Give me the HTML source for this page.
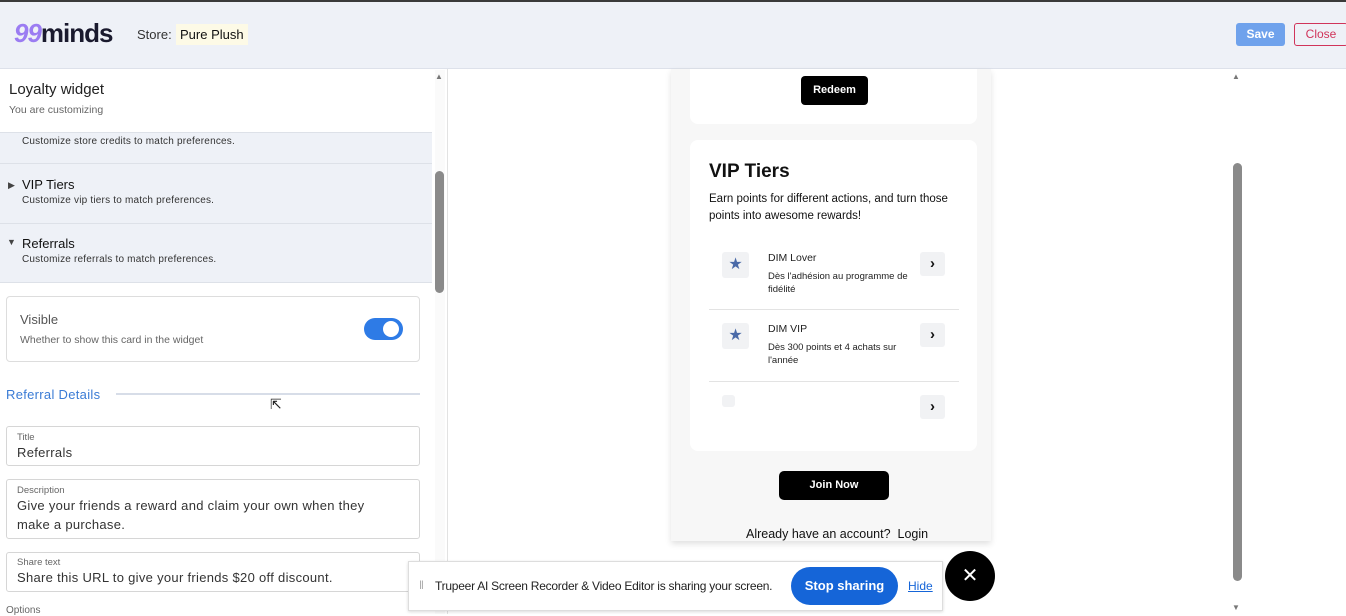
<!DOCTYPE html>
<html><head><style>
*{box-sizing:border-box;margin:0;padding:0}
body{width:1346px;height:614px;overflow:hidden;background:#fff;font-family:"Liberation Sans",sans-serif;position:relative;color:#222}
.a{position:absolute}
.hdr{left:0;top:0;width:1346px;height:69px;background:#eef1f7;border-top:2px solid #3a3a3a;border-bottom:1px solid #dde1ea}
.sec{left:0;width:432px;background:#eef1f7;border-bottom:1px solid #dde1e8}
.sec b{position:absolute;left:22px;font-weight:normal;font-size:13px;color:#111}
.sec i{position:absolute;left:22px;font-style:normal;font-size:10px;color:#333;letter-spacing:.2px}
.inp{left:6px;width:414px;border:1px solid #d6d6d6;border-radius:3px;background:#fff}
.inp .l{position:absolute;left:10px;font-size:9.5px;color:#666}
.inp .v{position:absolute;left:10px;font-size:13px;color:#333;line-height:19px;letter-spacing:.3px}
.arr{left:920px;width:25px;height:24px;background:#f1f2f4;border-radius:3px;font-size:15px;text-align:center;line-height:23px;font-weight:bold;color:#111}
.star{left:722px;width:27px;height:26px;background:#f1f2f4;border-radius:3px;color:#4a6aa8;font-size:16px;text-align:center;line-height:26px}
</style></head><body>
<div class="a hdr"></div>
<div class="a" style="left:14px;top:18px;font-size:26px;font-weight:bold;letter-spacing:-1px"><span style="color:#9b7cf2;font-style:italic">99</span><span style="color:#1a1a2e">minds</span></div>
<div class="a" style="left:137px;top:27px;font-size:13px;color:#333">Store:</div>
<div class="a" style="left:176px;top:24px;padding:3px 4px;background:#fdfae6;font-size:13px;color:#111">Pure Plush</div>
<div class="a" style="left:1236px;top:23px;width:49px;height:23px;background:#6fa2ec;border-radius:3px;color:#fff;font-size:12px;font-weight:bold;text-align:center;line-height:23px">Save</div>
<div class="a" style="left:1294px;top:23px;width:54px;height:23px;border:1px solid #d0345a;border-radius:3px;color:#d0345a;font-size:12px;text-align:center;line-height:21px">Close</div>

<div class="a" style="left:9px;top:81px;font-size:15px;color:#222">Loyalty widget</div>
<div class="a" style="left:9px;top:104px;font-size:10.5px;color:#666">You are customizing</div>
<div class="a sec" style="top:132px;height:32px;border-top:1px solid #dde1e8"><i style="top:3px">Customize store credits to match preferences.</i></div>
<div class="a sec" style="top:164px;height:60px"><span class="a" style="left:8px;top:16px;font-size:9px;color:#444">▶</span><b style="top:13px">VIP Tiers</b><i style="top:31px">Customize vip tiers to match preferences.</i></div>
<div class="a sec" style="top:224px;height:59px"><span class="a" style="left:7px;top:13px;font-size:9px;color:#444">▼</span><b style="top:12px">Referrals</b><i style="top:30px">Customize referrals to match preferences.</i></div>
<div class="a" style="left:6px;top:296px;width:414px;height:66px;border:1px solid #ddd;border-radius:4px"></div>
<div class="a" style="left:20px;top:312px;font-size:13px;color:#555">Visible</div>
<div class="a" style="left:20px;top:334px;font-size:10.5px;color:#666">Whether to show this card in the widget</div>
<div class="a" style="left:364px;top:318px;width:39px;height:22px;border-radius:11px;background:#2e7be6"><div class="a" style="left:19px;top:3px;width:16px;height:16px;border-radius:50%;background:#fff"></div></div>
<div class="a" style="left:6px;top:387px;font-size:13px;color:#3a7bd5;letter-spacing:.3px">Referral Details</div>
<div class="a" style="left:116px;top:393px;width:304px;height:2px;background:#d7dde8"></div>
<div class="a" style="left:270px;top:396px;font-size:14px">⇱</div>
<div class="a inp" style="top:426px;height:40px"><span class="l" style="top:5px">Title</span><span class="v" style="top:16px">Referrals</span></div>
<div class="a inp" style="top:479px;height:60px"><span class="l" style="top:5px">Description</span><span class="v" style="top:16px;width:380px">Give your friends a reward and claim your own when they make a purchase.</span></div>
<div class="a inp" style="top:552px;height:40px"><span class="l" style="top:4px">Share text</span><span class="v" style="top:15px">Share this URL to give your friends $20 off discount.</span></div>
<div class="a" style="left:6px;top:605px;font-size:10px;color:#666">Options</div>
<div class="a" style="left:435px;top:70px;width:10px;height:544px;background:#fafafa"></div>
<div class="a" style="left:435px;top:72px;font-size:8px;color:#777">▲</div>
<div class="a" style="left:435px;top:171px;width:9px;height:122px;background:#8a8a8a;border-radius:5px"></div>
<div class="a" style="left:447px;top:69px;width:1px;height:545px;background:#e2e2e2"></div>

<div class="a" style="left:671px;top:69px;width:320px;height:472px;background:#f7f7f7;box-shadow:0 3px 6px rgba(0,0,0,.12)"></div>
<div class="a" style="left:690px;top:69px;width:287px;height:55px;background:#fff;border-radius:0 0 8px 8px"></div>
<div class="a" style="left:801px;top:76px;width:67px;height:29px;background:#000;border-radius:4px;color:#fff;font-size:11px;font-weight:bold;text-align:center;line-height:29px">Redeem</div>
<div class="a" style="left:690px;top:140px;width:287px;height:311px;background:#fff;border-radius:8px"></div>
<div class="a" style="left:709px;top:161px;font-size:19px;font-weight:bold;color:#111">VIP Tiers</div>
<div class="a" style="left:709px;top:191px;width:250px;font-size:11.5px;line-height:16.5px;color:#111">Earn points for different actions, and turn those points into awesome rewards!</div>
<div class="a star" style="top:252px">★</div>
<div class="a" style="left:768px;top:252px;font-size:10.5px">DIM Lover</div>
<div class="a" style="left:768px;top:270px;width:150px;font-size:9.5px;line-height:13px">Dès l'adhésion au programme de fidélité</div>
<div class="a arr" style="top:252px">›</div>
<div class="a" style="left:709px;top:309px;width:250px;height:1px;background:#e3e3e3"></div>
<div class="a star" style="top:323px">★</div>
<div class="a" style="left:768px;top:323px;font-size:10.5px">DIM VIP</div>
<div class="a" style="left:768px;top:341px;width:140px;font-size:9.5px;line-height:13px">Dès 300 points et 4 achats sur l'année</div>
<div class="a arr" style="top:323px">›</div>
<div class="a" style="left:709px;top:381px;width:250px;height:1px;background:#e3e3e3"></div>
<div class="a" style="left:722px;top:395px;width:13px;height:12px;background:#f1f2f4;border-radius:3px"></div>
<div class="a arr" style="top:395px">›</div>
<div class="a" style="left:779px;top:471px;width:110px;height:29px;background:#000;border-radius:5px;color:#fff;font-size:11px;font-weight:bold;text-align:center;line-height:29px">Join Now</div>
<div class="a" style="left:746px;top:527px;font-size:12.5px;color:#111">Already have an account?&nbsp; Login</div>

<div class="a" style="left:1232px;top:72px;font-size:8px;color:#777">▲</div>
<div class="a" style="left:1233px;top:163px;width:9px;height:418px;background:#8a8a8a;border-radius:5px"></div>
<div class="a" style="left:1232px;top:603px;font-size:8px;color:#777">▼</div>

<div class="a" style="left:408px;top:561px;width:535px;height:50px;background:#fff;border:1px solid #ddd;box-shadow:0 1px 3px rgba(0,0,0,.15)"></div>
<div class="a" style="left:419px;top:578px;font-size:12px;color:#aaa">‖</div>
<div class="a" style="left:435px;top:579px;font-size:12px;color:#222;letter-spacing:-.25px">Trupeer AI Screen Recorder &amp; Video Editor is sharing your screen.</div>
<div class="a" style="left:791px;top:567px;width:107px;height:38px;background:#1565d8;border-radius:19px;color:#fff;font-size:13px;font-weight:bold;text-align:center;line-height:38px">Stop sharing</div>
<div class="a" style="left:908px;top:579px;font-size:12px;color:#1565d8;text-decoration:underline">Hide</div>
<div class="a" style="left:945px;top:551px;width:50px;height:50px;border-radius:50%;background:#000;color:#fff;font-size:20px;text-align:center;line-height:50px">✕</div>
</body></html>
